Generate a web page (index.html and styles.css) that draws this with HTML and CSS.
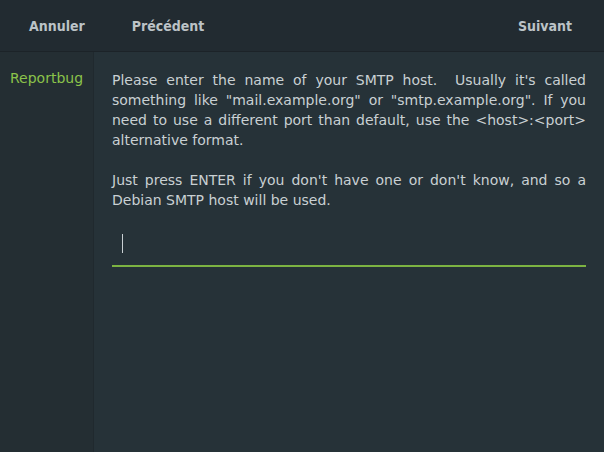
FILE: index.html
```html
<!DOCTYPE html>
<html lang="fr">
<head>
<meta charset="utf-8">
<title>Reportbug</title>
<link rel="stylesheet" href="styles.css">
</head>
<body>
<header class="headerbar">
  <button class="hb-btn hb-cancel">Annuler</button>
  <button class="hb-btn hb-prev">Précédent</button>
  <span class="hb-spacer"></span>
  <button class="hb-btn hb-next">Suivant</button>
</header>
<div class="main">
  <nav class="sidebar">
    <div class="sidebar-item">Reportbug</div>
  </nav>
  <section class="content">
    <p class="msg">Please enter the name of your SMTP host.&nbsp; Usually it's called something like "mail.example.org" or "smtp.example.org". If you need to use a different port than default, use the &lt;host&gt;:&lt;port&gt; alternative format.</p>
    <p class="msg msg-last">Just press ENTER if you don't have one or don't know, and so a Debian SMTP host will be used.</p>
    <div class="entry"><span class="caret"></span></div>
  </section>
</div>
</body>
</html>
```
FILE: styles.css
```css
html, body {
  margin: 0;
  padding: 0;
  height: 100%;
}
body {
  background: #263238;
  color: #c9d0d3;
  font-family: "DejaVu Sans", sans-serif;
  font-size: 14px;
  display: flex;
  flex-direction: column;
  overflow: hidden;
}
.headerbar {
  height: 51px;
  flex: none;
  display: flex;
  align-items: center;
  background: #222b31;
  border-bottom: 1px solid #1c2328;
  padding: 0 32px 0 29px;
}
.hb-btn {
  background: none;
  border: none;
  padding: 0;
  margin: 0;
  font-family: "DejaVu Sans Condensed", "DejaVu Sans", sans-serif;
  font-size: 14px;
  font-weight: bold;
  color: #bcc3c7;
}
.hb-prev {
  margin-left: 47px;
}
.hb-spacer {
  flex: 1;
}
.main {
  flex: 1;
  display: flex;
}
.sidebar {
  width: 93px;
  flex: none;
  background: #242e33;
  border-right: 1px solid #20292e;
}
.sidebar-item {
  padding: 16px 0 0 10px;
  line-height: 20px;
  color: #8bc34a;
}
.content {
  flex: 1;
  padding: 18px 18px 0 18px;
}
.msg {
  margin: 0 0 20px 0;
  line-height: 20px;
  text-align: justify;
}
.msg-last {
  margin-bottom: 0;
}
.entry {
  margin-top: 13px;
  height: 42px;
  border-bottom: 2px solid #7cb342;
  position: relative;
}
.caret {
  position: absolute;
  left: 10px;
  top: 11px;
  width: 1px;
  height: 19px;
  background: #c9d0d3;
}
```
